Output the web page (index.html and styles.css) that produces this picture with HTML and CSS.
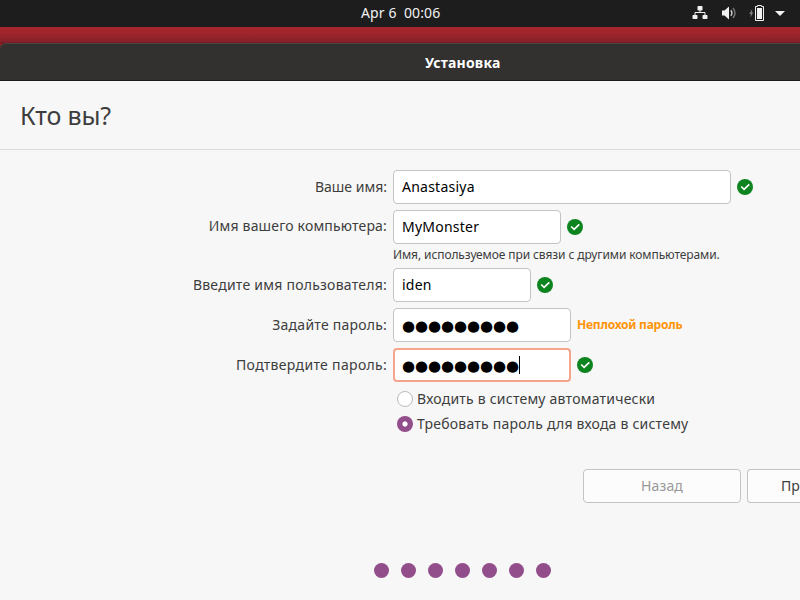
FILE: index.html
```html
<!DOCTYPE html>
<html lang="ru">
<head>
<meta charset="utf-8">
<title>Установка</title>
<link rel="stylesheet" href="styles.css">
</head>
<body>
<svg class="defs" width="0" height="0"><symbol id="ok" viewBox="0 0 16 16"><circle cx="8" cy="8" r="8" fill="#0e8420"/><path d="M4.200 7.500 7.100 10.300 12.300 5.400" fill="none" stroke="#fff" stroke-width="1.700"/></symbol></svg>
<header class="topbar">
  <span class="clock">Apr 6&nbsp; 00:06</span>
  <div class="tray">
    <svg class="net" width="16" height="16" viewBox="0 0 16 16"><g fill="#f2f2f2"><rect x="5.500" y="1" width="5" height="4.500" rx=".8"/><rect x="0.500" y="10" width="5" height="4" rx=".8"/><rect x="10.500" y="10" width="5" height="4" rx=".8"/></g><path d="M8 5v2.500M3 10V7.500H13V10" fill="none" stroke="#f2f2f2"/></svg>
    <svg class="vol" width="16" height="16" viewBox="0 0 16 16"><path d="M1 5.500H3.500L8 1.500V14.500L3.500 10.500H1Z" fill="#f2f2f2"/><path d="M9.800 5.200Q12.100 8 9.800 10.800" fill="none" stroke="#d0d0d0" stroke-width="1.400"/><path d="M12 3Q16 8 12 13" fill="none" stroke="#777" stroke-width="1.400"/></svg>
    <svg class="bat" width="16" height="16" viewBox="0 0 16 16"><path d="M3.300 4 .2 8.800H2L1.200 12.500 4.200 7.500H2.600Z" fill="#888"/><path d="M6.500 1.500H8.500V.5H12.500V1.500H14.500V15.500H6.500Z" fill="none" stroke="#f2f2f2"/><rect x="8" y="3" width="5" height="11" fill="#f2f2f2"/></svg>
    <svg class="arr" width="10" height="5" viewBox="0 0 10 5"><path d="M0 0H10L5 5Z" fill="#f2f2f2"/></svg>
  </div>
</header>
<main class="window">
  <div class="titlebar">Установка</div>
  <h1 class="heading">Кто вы?</h1>
  <section class="form">
    <div class="row"><label class="label name-label">Ваше имя:</label><div class="field w-name">Anastasiya</div><svg class="ok"><use href="#ok"/></svg></div>
    <div class="row"><label class="label host-label">Имя вашего компьютера:</label><div class="field w-host">MyMonster</div><svg class="ok"><use href="#ok"/></svg></div>
    <p class="hint">Имя, используемое при связи с другими компьютерами.</p>
    <div class="row"><label class="label">Введите имя пользователя:</label><div class="field w-user">iden</div><svg class="ok"><use href="#ok"/></svg></div>
    <div class="row"><label class="label">Задайте пароль:</label><div class="field w-pass"><span class="mask">●●●●●●●●●</span></div><span class="strength">Неплохой пароль</span></div>
    <div class="row"><label class="label confirm-label">Подтвердите пароль:</label><div class="field w-pass focus"><span class="mask">●●●●●●●●●</span><span class="caret"></span></div><svg class="ok"><use href="#ok"/></svg></div>
    <div class="option"><span class="radio"></span><span>Входить в систему автоматически</span></div>
    <div class="option"><span class="radio on"></span><span>Требовать пароль для входа в систему</span></div>
  </section>
  <div class="actions"><button class="btn off">Назад</button><button class="btn next">Пр</button></div>
  <div class="steps"><i></i><i></i><i></i><i></i><i></i><i></i><i></i></div>
</main>
</body>
</html>
```
FILE: styles.css
```css
* { box-sizing: border-box; }
body { margin: 0; width: 800px; height: 600px; overflow: hidden; background: #f7f7f7; color: #3d3d3d; font: 14px/20px "Noto Sans", "Open Sans", sans-serif; }
.defs { display: block; }
.topbar { height: 27px; background: #1d1d1d; color: #f2f2f2; display: flex; align-items: center; justify-content: flex-end; }
.clock { flex: 1; padding: 0 0 2px 361px; white-space: pre; letter-spacing: .1px; }
.tray { display: flex; align-items: center; padding: 0 15px 1px 0; }
.vol { margin-left: 12px; }
.bat { margin-left: 13px; }
.arr { margin-left: 10px; margin-top: 1px; }
.vol { position: relative; left: 1px; }
.window { height: 573px; padding-top: 16px; background: linear-gradient(#a7262d, #a0252c 6px, #86202a 15px, #6a1a22 16px, #8a2029 17px, #8a2029 24px, #f7f7f7 24px); }
.titlebar { height: 38px; background: #33312f; border-top: 1px solid #484644; border-bottom: 1px solid #1c1b1a; border-top-left-radius: 6px; color: #fff; font-weight: 700; line-height: 37px; padding-left: 425px; letter-spacing: .2px; }
.heading { margin: 0; height: 69px; border-bottom: 1px solid #dcdcdc; padding-left: 20px; font-size: 25px; font-weight: 400; line-height: 69px; letter-spacing: -.15px; }
.form { padding-top: 20px; }
.row { display: flex; align-items: center; height: 34px; margin-bottom: 6px; gap: 6px; }
.label { width: 387px; text-align: right; white-space: nowrap; letter-spacing: .24px; }
.name-label { letter-spacing: 0; }
.host-label { padding-bottom: 2px; letter-spacing: .17px; }
.confirm-label { letter-spacing: .33px; }
.field { height: 34px; border: 1px solid #c4c4c4; border-radius: 4px; background: #fff; color: #000; padding-left: 8px; display: flex; align-items: center; letter-spacing: .24px; }
.w-name { width: 338px; }
.w-host { width: 168px; }
.w-user { width: 138px; }
.w-pass { width: 178px; }
.focus { border: 2px solid #f4a58c; padding-left: 7px; }
.ok { width: 16px; height: 16px; }
.hint { margin: -6px 0 0 393px; height: 24px; font-size: 12px; line-height: 21px; letter-spacing: -.1px; }
.mask { font: 15px/20px "DejaVu Sans", sans-serif; letter-spacing: -.09px; padding-top: 2px; }
.caret { width: 1px; height: 18px; background: #000; }
.strength { color: #ff9408; font-weight: 700; font-size: 12px; letter-spacing: -.22px; }
.option { display: flex; align-items: center; height: 25px; padding-left: 397px; gap: 4px; letter-spacing: .22px; position: relative; top: -2px; }
.radio { width: 16px; height: 16px; border: 1px solid #bbb; border-radius: 50%; background: #fff; }
.radio.on { border: none; background: radial-gradient(circle, #fff 2.200px, #924d8b 3px); }
.actions { display: flex; gap: 6px; margin-top: 31px; padding-left: 583px; overflow: hidden; }
.btn { flex: none; width: 158px; height: 34px; border: 1px solid #c4c4c4; border-radius: 4px; background: #fcfcfc; color: #3d3d3d; font: inherit; padding: 0; letter-spacing: .1px; }
.off { color: #999; }
.next { width: 53px; border-right: 0; border-radius: 4px 0 0 4px; text-align: left; padding-left: 33px; white-space: nowrap; }
.steps { display: flex; gap: 12px; margin: 60px 0 0 374px; }
.steps i { width: 15px; height: 15px; border-radius: 50%; background: #924d8b; }
```
